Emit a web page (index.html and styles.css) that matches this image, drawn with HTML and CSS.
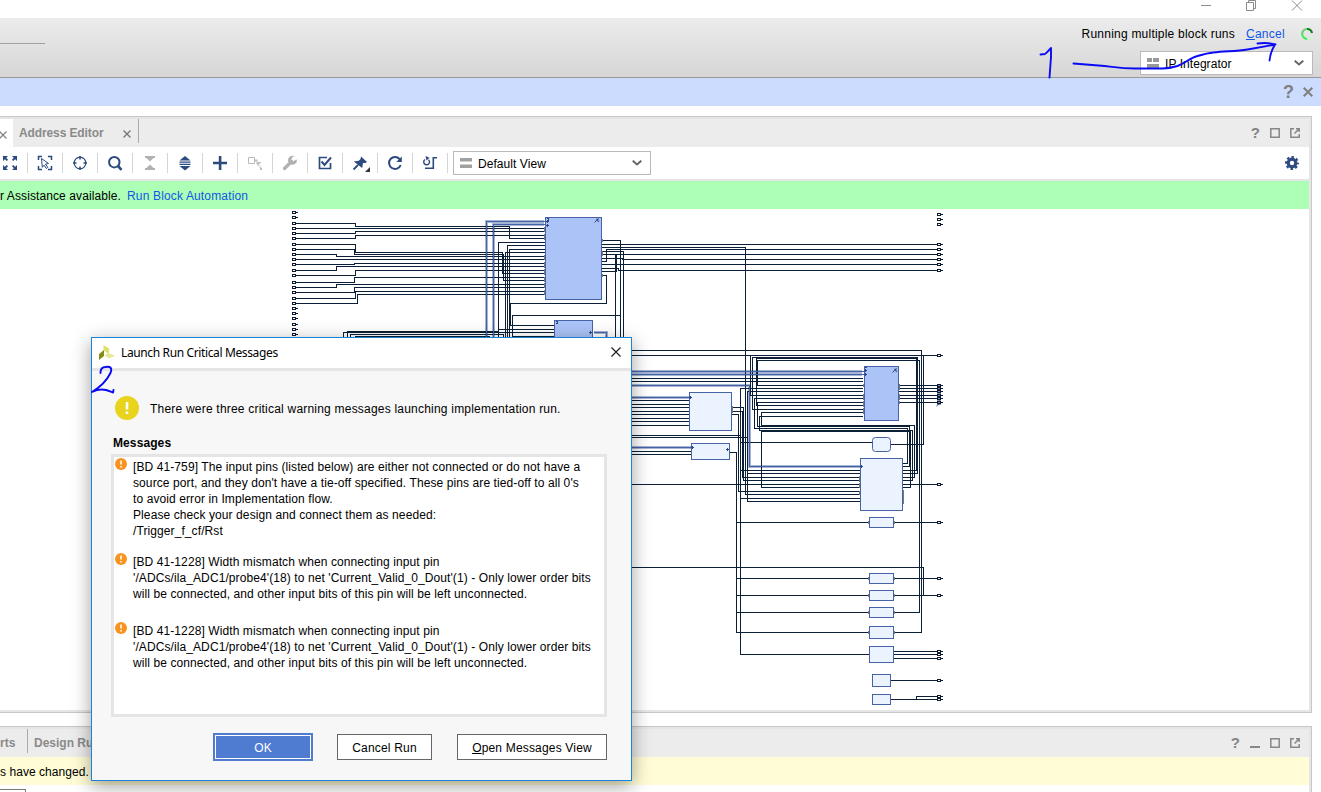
FILE: index.html
```
<!DOCTYPE html>
<html lang="en">
<head>
<meta charset="utf-8">
<title>Block Design</title>
<link rel="stylesheet" href="styles.css">
</head>
<body>
<div class="app">
  <div class="titlebar">
    <svg width="120" height="18" viewBox="1201 0 120 18" fill="none" stroke="#8a8a8a"><path d="M1201 5.500h10M1246.500 2.500h7v8h-7zM1248.500 2v-1.500h7v8h-2M1292 0.500l10 10M1302 0.500l-10 10"/></svg>
  </div>
  <div class="header">
    <div class="header-line"></div>
    <div class="header-right">
      <div class="status"><span class="running">Running multiple block runs</span><a class="link cancel"><u>C</u>ancel</a>
        <svg class="spinner" width="14" height="14" viewBox="0 0 14 14" fill="none" stroke-width="2.200"><path d="M7 2a5 5 0 0 1 5 4" stroke="#16801d"/><path d="M7 2a5 5 0 0 0-4.800 5" stroke="#6fce76"/><path d="M2.200 7a5 5 0 0 0 5 5" stroke="#47ee55"/><path d="M8 12a5 5 0 0 0 3.500-2.500" stroke="#cdf5d0"/></svg>
      </div>
      <div class="combo layout-combo">
        <svg width="12" height="10" fill="#999"><path d="M0 0h5v4H0zM6 0h6v4H6zM0 6h12v4H0z"/></svg><span>IP Integrator</span>
        <svg class="chev" width="10" height="6" fill="none" stroke="#686868" stroke-width="2"><path d="M.7.700L5 4.500 9.300.7"/></svg>
      </div>
    </div>
  </div>
  <div class="bluebar">
    <b class="q">?</b><svg width="10" height="10" fill="none" stroke="#7f7f80" stroke-width="2"><path d="M.7.700l8.600 8.600M9.300.7L.7 9.300"/></svg>
  </div>

  <div class="panel design">
    <div class="tabs">
      <div class="tab active"><svg width="8" height="8" fill="none" stroke="#888" stroke-width="1.300"><path d="M.5.500l7 7M7.500.5l-7 7"/></svg></div>
      <div class="tab address"><b>Address Editor</b><svg width="8" height="8" fill="none" stroke="#777" stroke-width="1.400"><path d="M.5.500l7 7M7.500.5l-7 7"/></svg></div>
      <div class="panel-buttons">
        <b>?</b>
        <svg width="10" height="10" fill="none" stroke="#888" stroke-width="1.500"><path d="M.8.800h8.400v8.400H.8z"/></svg>
        <svg width="10" height="10" fill="none" stroke="#888" stroke-width="1.500"><path d="M4 .8H.8v8.400h8.400V6M4.500 5.500L9 1M6 .8h3.200V4"/></svg>
      </div>
    </div>
    <div class="toolbar">
      <div class="tool"><svg width="16" height="16" fill="#2d4a80" stroke="#2d4a80"><path d="M1 1h5L1 6zM15 1v5l-5-5zM1 15v-5l5 5zM15 15h-5l5-5z" stroke="none"/><path d="M3 3l4 4M13 3L9 7M3 13l4-4M13 13L9 9" stroke-width="1.800" stroke-dasharray="3.400 4"/></svg></div>
      <div class="tool"><svg width="16" height="16" fill="none" stroke="#2d4a80" stroke-width="1.500"><path d="M1.500 5V1.500H5M11 1.500h3.500V5M1.500 11v3.500H5M11 14.500h3.500V11"/><path d="M4.500 3.500l7 5-3 .6 2.300 3.300-1.500 1.100-2.200-3.400-1.800 2.200z" stroke-width="1"/></svg></div>
      <div class="tool"><svg width="16" height="16" fill="none" stroke="#2d4a80" stroke-width="1.200"><circle cx="8" cy="8" r="5.800"/><path d="M8 1v3.500M8 11.500v3.500M1 8h3.500M11.500 8h3.500" stroke-width="1.600"/></svg></div>
      <div class="tool"><svg width="16" height="16" fill="none" stroke="#2d4a80" stroke-width="2"><circle cx="7.300" cy="7.200" r="5.200"/><path d="M11 11l3.500 3.800" stroke-width="2.600"/></svg></div>
      <div class="tool"><svg width="16" height="16" fill="#b1b1b1"><path d="M3 1h10v2H3zM4.500 3h7L8 6.500zM8 9.500l3.500 3.500h-7zM3 13h10v2H3z"/></svg></div>
      <div class="tool"><svg width="16" height="16" fill="#2d4a80"><path d="M8 1l5.500 4.500h-11zM2.500 6.500h11v1.200h-11zM2.500 8.800h11V10h-11zM2.500 11h11L8 15.500z"/></svg></div>
      <div class="tool"><svg width="16" height="16" fill="#2d4a80"><path d="M6.800 1h2.600v5.700H15v2.600H9.400V15H6.800V9.300H1V6.700h5.800z"/></svg></div>
      <div class="tool"><svg width="16" height="16" fill="none" stroke="#bbb"><path d="M1.500 2.500h6v6h-6z"/><path d="M8 5.500h2.500" stroke-width="2"/><path d="M9.500 7h5L11.500 9.500l3.500 4v1.500h-2v-3l-3.500-3z" fill="#bbb" stroke="none"/></svg></div>
      <div class="tool"><svg width="16" height="16"><path d="M2.500 13.500L9.500 6.500" stroke="#b1b1b1" stroke-width="3.200" stroke-linecap="round"/><path d="M13.300 1.600A4.500 4.500 0 1 0 15 6l-.7-1.800-3 2.200-2-1.800 1.500-3z" fill="#b1b1b1"/></svg></div>
      <div class="tool"><svg width="16" height="16" fill="none" stroke="#2d4a80"><path d="M10 2.500H2.500v11h11V8" stroke-width="1.700"/><path d="M4.500 6.500l3 3.500 6.500-7.500" stroke-width="2"/></svg></div>
      <div class="tool"><svg width="22" height="18" viewBox="-3 -1 22 18"><path d="M1.500 14.500L6 10" stroke="#2d4a80" stroke-width="1.800"/><path d="M9 1.500l6 5.500-1.500 1-2.500 0-.8 5L7.500 11 5 9 1.800 6.500l5-.8L8.500 4z" fill="#2d4a80"/><path d="M18 12v5h-5z" fill="#333"/></svg></div>
      <div class="tool"><svg width="16" height="16" fill="none" stroke="#2d4a80" stroke-width="2"><path d="M13 4.500A6 6 0 1 0 13.700 10"/><path d="M14.800 1.500V7H9.300z" fill="#2d4a80" stroke="none"/></svg></div>
      <div class="tool"><svg width="16" height="16" fill="none" stroke="#2d4a80"><path d="M3 4.500a2.900 2.900 0 1 0 3.500.2" stroke-width="1.400"/><path d="M3.500 1l4 1.800L4.500 5.500z" fill="#2d4a80" stroke="none"/><path d="M15 2.700h-3.700v10.600H3" stroke-width="1.600"/></svg></div>
      <div class="combo view-combo">
        <svg width="12" height="10" fill="#a0a0a0"><path d="M0 0h12v3.500H0zM0 6.500h12V10H0z"/></svg><span>Default View</span>
        <svg class="chev" width="10" height="6" fill="none" stroke="#686868" stroke-width="2"><path d="M.7.700L5 4.500 9.300.7"/></svg>
      </div>
      <svg class="gear" width="14" height="14" fill="none" stroke="#2d4a80"><circle cx="7" cy="7" r="3.800" stroke-width="3.200"/><circle cx="7" cy="7" r="6" stroke-width="2" stroke-dasharray="2.500 2.212" stroke-dashoffset="1.250"/></svg>
    </div>
    <div class="assist"><span>r Assistance available.</span><a class="link">Run Block Automation</a></div>
    <svg class="diagram" width="1309" height="501" viewBox="0 209 1309 501" shape-rendering="crispEdges">
      <defs>
        <g id="port"><path d="M.5.500h3v2h-3z" fill="none" stroke="#0d1a30"/><path d="M4 1.500h1.500" stroke="#0d1a30"/></g>
      </defs>
      <g class="bus-halo"><path d="M486.500 340V221.500H544M493.500 340V224.500H544M594 332.500H606.500V340M631 371.500H862M631 374.500H862M631 385.500H749.500V466.500H860M631 397.500H689M631 447.500H691"/></g>
      <g class="wire">
        <path d="M297 223.500H355.500V226.500H509.500V238.500H545M297 228.500H545M297 233.500H355.500V231.500H545M297 238.500H355.500V235.500H545M297 244.500H355.500V252.500H502.500V273.500H545M297 249.500H354.500V254.500H503.500V280.500H545M297 254.500H336.500V256.500H545M297 259.500H545M297 264.500H354.500V263.500H545M297 270.500H336.500V266.500H545M297 275.500H355.500V270.500H545M297 282.500H354.500V277.500H545M297 287.500H336.500V284.500H545M297 292.500H354.500V287.500H545M297 298.500H355.500V291.500H545M297 303.500H357.500V294.500H545M354 292.500H356"/>
        <path d="M498.500 340V242.500H545M507.500 340V245.500H545M509.500 340V249.500H545M505.500 340V252.500H545M554 325.500H510.500V303.500H606.500V275.500H602M554 336.500H512.500V315.500H620.500M498 329.500H554M505 332.500H554M343.500 340V332.500H505M347.500 340V331.500H498M350.500 340V334.500H503.500V340M355 336.500H490"/>
        <path d="M602 240.500H620.500V340M602 244.500H938M602 247.500H745.500V494.500H860M602 261.500H606.500V249.500H938M602 251.500H623.500V340M602 254.500H938M602 258.500H622.500V259.500H938M602 264.500H938M602 268.500H618.500V270.500H938M602 271.500H616.500V254M615.500 254V340"/>
        <path d="M631 350.500H921.500V632.500H893M631 355.500H938M863 395.500H750.500V355M863 409.500H752.500V357.500H917.500V473.500H903M863 405.500H756.500V358.500H916.500V470.500H903M863 385.500H757.500V360.500H919.500V612.500H893M863 398.500H754.500V428.500H907.500V463.500H903M863 402.500H757.500V426.500H909.500V466.500H903M863 412.500H761.500V425.500H914.500V477.500H903M863 416.500H759.500V430.500H912.500V480.500H903M860 487.500H761.500V431.500H910.500V487.500H903M631 378.500H863M631 381.500H863M863 388.500H740.500V654.500H869M863 391.500H747.500V501.500H860M923.500 355V444.500H891M740 442.500H872"/>
        <path d="M631 400.500H689M631 404.500H689M631 407.500H689M631 411.500H689M631 414.500H689M631 418.500H689M631 421.500H689M631 425.500H689M732 407.500H743.500V480.500H860M732 411.500H742.500V477.500H860M732 414.500H738.500V491.500H860M631 435.500H740M631 437.500H747M631 451.500H691M631 454.500H691M730 452.500H736.500V632.500H869M740 470.500H860M747 473.500H860M631 484.500H860M740 498.500H860M903 484.500H938"/>
        <path d="M899 385.500H938M899 388.500H938M899 391.500H938M899 395.500H938M899 398.500H938M899 402.500H938M736 522.500H938M736 578.500H938M736 595.500H938M736 612.500H869M631 567.500H923.500V595M893 651.500H938M893 654.500H938M893 658.500H938M890 680.500H938M890 699.500H938M916.500 699V696.500H938"/>
      </g>
      <g class="bus"><path d="M486.500 340V221.500H547M493.500 340V224.500H547M594 332.500H606.500V340M631 371.500H865M631 374.500H865M631 385.500H749.500V466.500H862M631 397.500H691M631 447.500H693"/></g>
      <g class="pins"><path d="M544.500 227v5M544.500 234v6M544.500 255v5M544.500 262v6M544.500 269v6M544.500 277v5M544.500 283v5M544.500 290v5M602.500 239v3M602.500 251v5M602.500 274v3M689.500 400v5M689.500 406v10M689.500 417v10M732.500 406v7M863.500 384v3M863.500 394v6M863.500 401v6M863.500 408v6M899.500 384v6M899.500 394v6M899.500 401v3M859.500 476v6M859.500 483v5M859.500 491v4M903.500 490v14M868.500 521v3M894.500 521v3M868.500 577v3M894.500 577v3M868.500 594v3M894.500 594v3M868.500 611v3M894.500 611v3M868.500 631v3M894.500 631v3"/></g>
      <g class="block dark"><rect x="545.500" y="217.500" width="56" height="82" rx="1"/><rect x="554.500" y="320.500" width="38" height="30" rx="1"/><rect x="864.500" y="366.500" width="34" height="54"/></g>
      <g class="block"><rect x="689.500" y="392.500" width="42" height="38" rx="1"/><rect x="691.500" y="443.500" width="38" height="16"/><rect class="soft" x="872.500" y="437.500" width="18" height="14" rx="3"/><rect x="860.500" y="458.500" width="42" height="52" rx="1"/><rect x="869.500" y="517.500" width="24" height="10"/><rect x="869.500" y="573.500" width="24" height="10"/><rect x="869.500" y="590.500" width="24" height="10"/><rect x="869.500" y="607.500" width="24" height="10"/><rect x="869.500" y="626.500" width="24" height="12"/><rect x="869.500" y="646.500" width="24" height="16"/><rect x="872.500" y="674.500" width="18" height="12" rx="1"/><rect x="872.500" y="694.500" width="18" height="10" rx="1"/></g>
      <g class="marks"><path d="M546 221.500h3M547.500 220v3M546 225.500h3M547.500 224v3M546.500 218.500h2v2h-2M555.500 321.500h2v2h-2M589 332.500h3M590.500 331v3M864 370.500h3M865.500 369v3M864 374.500h3M865.500 373v3M865 367.500h2M689 397.500h3M690.500 396v3M691 447.500h3M692.500 446v3M726 449.500h3M727.500 448v3M860 466.500h3M861.500 465v3"/><path shape-rendering="auto" d="M594.500 222.500l4-4M596 219.500l3 2.500M597 218.500l2 2M892.500 372.500l4-4M894 369.500l3 2.500M895 368.500l2 2M936.500 406l3.500-3"/><path class="cluster" shape-rendering="auto" d="M939 385v20"/></g>
      <g><use href="#port" x="292" y="211"/><use href="#port" x="292" y="216"/><use href="#port" x="292" y="222"/><use href="#port" x="292" y="227"/><use href="#port" x="292" y="232"/><use href="#port" x="292" y="237"/><use href="#port" x="292" y="243"/><use href="#port" x="292" y="248"/><use href="#port" x="292" y="253"/><use href="#port" x="292" y="258"/><use href="#port" x="292" y="263"/><use href="#port" x="292" y="269"/><use href="#port" x="292" y="274"/><use href="#port" x="292" y="281"/><use href="#port" x="292" y="286"/><use href="#port" x="292" y="291"/><use href="#port" x="292" y="297"/><use href="#port" x="292" y="302"/><use href="#port" x="292" y="307"/><use href="#port" x="292" y="312"/><use href="#port" x="292" y="317"/><use href="#port" x="292" y="323"/><use href="#port" x="292" y="328"/><use href="#port" x="292" y="333"/></g>
      <g><use href="#port" x="937" y="213"/><use href="#port" x="937" y="218"/><use href="#port" x="937" y="223"/><use href="#port" x="937" y="243"/><use href="#port" x="937" y="248"/><use href="#port" x="937" y="253"/><use href="#port" x="937" y="258"/><use href="#port" x="937" y="263"/><use href="#port" x="937" y="269"/><use href="#port" x="937" y="354"/><use href="#port" x="937" y="384"/><use href="#port" x="937" y="387"/><use href="#port" x="937" y="390"/><use href="#port" x="937" y="394"/><use href="#port" x="937" y="397"/><use href="#port" x="937" y="401"/><use href="#port" x="937" y="483"/><use href="#port" x="937" y="521"/><use href="#port" x="937" y="577"/><use href="#port" x="937" y="594"/><use href="#port" x="937" y="650"/><use href="#port" x="937" y="653"/><use href="#port" x="937" y="657"/><use href="#port" x="937" y="679"/><use href="#port" x="937" y="695"/><use href="#port" x="937" y="698"/></g>
    </svg>
  </div>

  <div class="panel runs">
    <div class="tabs">
      <div class="tab reports"><b>rts</b></div>
      <div class="tab design-runs"><b>Design Runs</b></div>
      <div class="panel-buttons">
        <b>?</b>
        <svg width="10" height="10" stroke="#888" stroke-width="2"><path d="M0 9h10"/></svg>
        <svg width="10" height="10" fill="none" stroke="#888" stroke-width="1.500"><path d="M.8.800h8.400v8.400H.8z"/></svg>
        <svg width="10" height="10" fill="none" stroke="#888" stroke-width="1.500"><path d="M4 .8H.8v8.400h8.400V6M4.500 5.500L9 1M6 .8h3.200V4"/></svg>
      </div>
    </div>
    <div class="stale">s have changed.</div>
    <div class="field"></div>
  </div>

  <div class="dialog">
    <div class="dialog-title">
      <svg width="16" height="15"><path d="M4.500 0L10 3.500V9L4.500 5.500z" fill="#dfe069"/><path d="M0 9l5-4v6L0 15z" fill="#858b15"/><path d="M5.500 10.500L9.500 8l6.500 2.800-6 2.400z" fill="#e5e792"/></svg>
      <span>Launch Run Critical Messages</span>
      <svg class="close" width="10" height="10" fill="none" stroke="#222" stroke-width="1.200"><path d="M.5.500l9 9M9.500.5l-9 9"/></svg>
    </div>
    <div class="dialog-body">
      <div class="summary"><svg width="24" height="24"><circle cx="12" cy="12" r="12" fill="#e8d31d"/><path d="M10.700 6h2.600v7.500h-2.600zM10.700 15.500h2.600V18h-2.600z" fill="#fff"/></svg><span>There were three critical warning messages launching implementation run.</span></div>
      <b class="caption">Messages</b>
      <div class="messages">
        <div class="msg first"><svg width="12" height="12"><circle cx="6" cy="6" r="6" fill="#f7931e"/><path d="M5.200 2.500h1.600v4H5.200zM5.200 8h1.600v1.600H5.200z" fill="#fff"/></svg><p>[BD 41-759] The input pins (listed below) are either not connected or do not have a<br>source port, and they don't have a tie-off specified. These pins are tied-off to all 0's<br>to avoid error in Implementation flow.<br>Please check your design and connect them as needed:<br>/Trigger_f_cf/Rst</p></div>
        <div class="msg"><svg width="12" height="12"><circle cx="6" cy="6" r="6" fill="#f7931e"/><path d="M5.200 2.500h1.600v4H5.200zM5.200 8h1.600v1.600H5.200z" fill="#fff"/></svg><p>[BD 41-1228] Width mismatch when connecting input pin<br>'/ADCs/ila_ADC1/probe4'(18) to net 'Current_Valid_0_Dout'(1) - Only lower order bits<br>will be connected, and other input bits of this pin will be left unconnected.</p></div>
        <div class="msg"><svg width="12" height="12"><circle cx="6" cy="6" r="6" fill="#f7931e"/><path d="M5.200 2.500h1.600v4H5.200zM5.200 8h1.600v1.600H5.200z" fill="#fff"/></svg><p>[BD 41-1228] Width mismatch when connecting input pin<br>'/ADCs/ila_ADC1/probe4'(18) to net 'Current_Valid_0_Dout'(1) - Only lower order bits<br>will be connected, and other input bits of this pin will be left unconnected.</p></div>
      </div>
      <div class="actions">
        <button class="btn ok">OK</button><button class="btn cancel-run">Cancel Run</button><button class="btn open-view"><u>O</u>pen Messages View</button>
      </div>
    </div>
  </div>

  <svg class="ink" width="1321" height="792" fill="none" stroke="#0a0af5" stroke-width="1.900" stroke-linecap="round" stroke-linejoin="round">
    <path d="M1040.500 54.500l4.500-.5c2-1 4-4 6-6v9l-1.500 20.500"/>
    <path d="M1073.500 63.500l25 2c14 1 20 3 36 3h28c6 0 10-1 15-2.500 8-3 12-8 20-10 5-1.500 10-3 16-3.500 12-1.500 22-1 34-3l28-5M1257.500 43.500c8-1 14 0 17.500 1-3 5-5 11-5.500 16"/>
    <path d="M100.500 373c0-4 2-6 5-6 5-1 7 1 5 6-4 8-10 14-18.500 19 6-3 10-3 14-2 4 1 5 2 7 2.500l.5-2.500"/>
  </svg>
</div>
</body>
</html>
```
FILE: styles.css
```
* { box-sizing: border-box; }
body { margin: 0; background: #fff; font: 12px "Liberation Sans", Arial, sans-serif; color: #000; }
svg { display: block; flex: none; }
.app { position: relative; width: 1321px; height: 792px; overflow: hidden; display: flex; flex-direction: column; }
.titlebar { height: 18px; flex: none; display: flex; justify-content: flex-end; }
.header { height: 60px; flex: none; display: flex; justify-content: space-between; background: linear-gradient(#ececec, #d6d6d6); border-bottom: 1px solid #999; }
.header-line { width: 45px; height: 26px; border-bottom: 1px solid #a0a0a0; }
.header-right { width: 250px; padding: 8px 8px 0 0; display: flex; flex-direction: column; align-items: flex-end; }
.status { display: flex; align-items: center; height: 16px; white-space: nowrap; margin-right: -1px; }
.running { letter-spacing: .22px; }
.link { color: #1157e8; }
.cancel { margin: 0 15px 0 11px; letter-spacing: .28px; }
.combo { display: flex; align-items: center; background: #fff; border: 1px solid #bababa; height: 24px; padding-left: 6px; white-space: nowrap; letter-spacing: .06px; }
.combo span { margin-left: 6px; padding-top: 2px; }
.combo .chev { margin-left: auto; }
.layout-combo { width: 173px; margin-top: 9px; padding-right: 8px; }
.bluebar { height: 28px; flex: none; background: #cbdcfe; display: flex; align-items: center; justify-content: flex-end; gap: 9px; padding-right: 8px; }
.q { font-size: 18px; color: #7f7f80; }
.panel { flex: none; width: 1312px; border: solid #c8c8c8; border-width: 1px 1px 1px 0; box-shadow: inset -2px -2px #e6e6e6; }
.design { margin-top: 10px; height: 597px; }
.design > *, .runs > * { margin-right: 2px; }
.tabs { height: 30px; background: #ececec; border-top: 2px solid #e5e5e5; display: flex; align-items: stretch; color: #8a8a8a; }
.tab { display: flex; align-items: center; white-space: nowrap; }
.active { width: 13px; background: #fff; padding-top: 3px; }
.active svg { margin-left: -1px; }
.address { width: 126px; padding-left: 6px; background: linear-gradient(#aaa, #aaa) right 0 / 1px 24px no-repeat; }
.address b { letter-spacing: -.11px; }
.address svg { margin: 2px 0 0 20px; }
.panel-buttons { margin-left: auto; padding-right: 9px; display: flex; align-items: center; gap: 10px; }
.panel-buttons b { font-size: 15px; color: #858585; margin-top: -1px; }
.toolbar { height: 34px; border-bottom: 2px solid #e5e5e5; display: flex; align-items: center; margin-left: -7px; }
.tool { width: 35px; height: 20px; border-right: 1px solid #d5d5d5; display: flex; align-items: center; justify-content: center; flex: none; }
.view-combo { width: 198px; margin-left: 5px; padding-right: 8px; }
.gear { margin-left: auto; margin-right: 10px; }
.assist { height: 28px; background: #acffb4; display: flex; align-items: center; padding-top: 1px; white-space: nowrap; }
.assist span { letter-spacing: .1px; }
.assist .link { margin-left: 6px; letter-spacing: .15px; }
.diagram { overflow: hidden; }
.wire { fill: none; stroke: #0b2036; }
.bus { fill: none; stroke: #4763a8; }
.bus-halo { fill: none; stroke: #a5b5d3; stroke-width: 3; }
.pins { stroke: #777; }
.block rect { fill: #ebf4fe; stroke: #4763a8; }
.block.dark rect { fill: #abc3f7; }
.block .soft { shape-rendering: auto; }
.marks { fill: none; stroke: #2d4885; }
.marks .cluster { stroke-width: 4; opacity: .6; }
.runs { margin-top: 13px; height: 80px; }
.reports { width: 28px; background: linear-gradient(#aaa, #aaa) right 0 / 1px 24px no-repeat; }
.design-runs { padding-left: 6px; }
.stale { height: 28px; background: #fffcd6; line-height: 30px; white-space: nowrap; letter-spacing: .05px; }
.field { width: 26px; height: 10px; margin-top: 4px; border: 1px solid #777; border-left: 0; }
.dialog { position: absolute; left: 91px; top: 337px; width: 541px; height: 444px; border: 1px solid #1883d7; background: #f7f7f7; box-shadow: 0 5px 18px rgba(0,0,0,.38); }
.dialog-title { height: 33px; border-bottom: 3px solid #e5e5e5; background: #fff; display: flex; align-items: center; padding: 0 10px 2px 7px; font: 12px "Noto Sans", "Open Sans", sans-serif; }
.dialog-title span { margin-left: 6px; letter-spacing: -.37px; white-space: nowrap; }
.close { margin-left: auto; }
.dialog-body { padding: 25px 24px 0 19px; }
.summary { display: flex; align-items: center; gap: 11px; padding-left: 4px; height: 24px; white-space: nowrap; letter-spacing: .21px; }
.summary span { padding-top: 2px; }
.caption { display: block; margin: 16px 0 0 2px; line-height: 14px; letter-spacing: .1px; }
.messages { width: 496px; height: 263px; margin-top: 4px; border: 3px solid #e5e5e5; background: #fff; padding: 1px; letter-spacing: .095px; }
.msg { display: flex; gap: 6px; height: 69px; white-space: nowrap; }
.msg.first { height: 95px; }
.msg p { margin: 1px 0 0; line-height: 16px; }
.actions { display: flex; align-items: center; justify-content: flex-end; margin-top: 16px; height: 28px; }
.btn { font: 12px "Liberation Sans", Arial, sans-serif; height: 26px; padding: 1px 0 0; background: #fff; border: 1px solid #666; color: #000; white-space: nowrap; letter-spacing: .18px; }
.ok { width: 100px; height: 28px; background: #4f7bd1; color: #fff; border: 2px solid #4f7bd1; box-shadow: inset 0 0 0 1px #fff; }
.cancel-run { width: 95px; margin: 0 25px 0 24px; }
.open-view { width: 150px; }
.ink { position: absolute; left: 0; top: 0; pointer-events: none; }
```
